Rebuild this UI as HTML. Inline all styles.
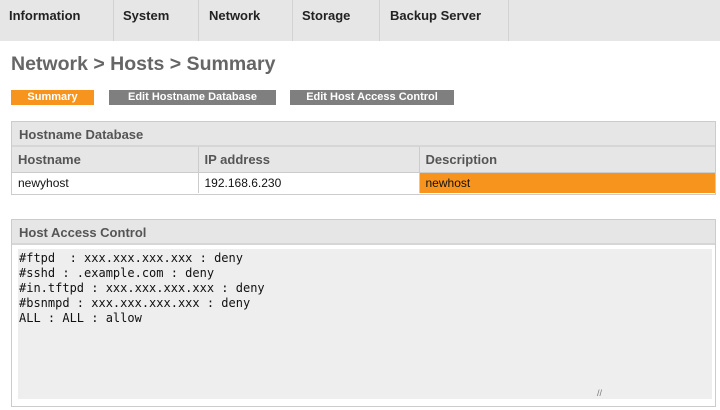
<!DOCTYPE html>
<html><head><style>
*{margin:0;padding:0;box-sizing:border-box}
body{width:720px;height:410px;background:#fff;font-family:"Liberation Sans",sans-serif;position:relative;overflow:hidden}
.nav{position:absolute;left:0;top:0;width:720px;height:41px;background:#e6e6e6}
.sep{position:absolute;top:0;width:1px;height:41px;background:#d2d2d2}
.nt{position:absolute;top:0;line-height:31px;font-weight:bold;font-size:13px;color:#222}
h1{position:absolute;left:11px;top:53px;font-size:19.5px;color:#666;font-weight:bold}
.btn{position:absolute;top:90px;height:15px;line-height:15px;color:#fff;font-size:11px;font-weight:bold;text-align:center;background:#7f7f7f}
.box{position:absolute;left:11px;width:705px;border:1px solid #ccc}
.hd{background:#e6e6e6;height:25px;line-height:25px;padding-left:7px;font-size:13px;color:#555;font-weight:bold;border-bottom:2px solid #d6d6d6}
table{border-collapse:collapse;width:100%;font-size:12px}
td{border-right:1px solid #ccc;padding-left:6px}
td:last-child{border-right:0}
tr.c td{background:#e6e6e6;color:#555;font-weight:bold;height:25px;font-size:13px;border-bottom:1px solid #ccc}
tr.d td{height:21px;color:#111}
pre{position:absolute;left:6px;top:29px;width:694px;height:150px;background:#eee;font-family:"DejaVu Sans Mono",monospace;font-size:12px;line-height:15px;padding:2px 1px;color:#111}
</style></head><body>
<div class="nav">
<div class="sep" style="left:113px"></div>
<div class="sep" style="left:198px"></div>
<div class="sep" style="left:292px"></div>
<div class="sep" style="left:379px"></div>
<div class="sep" style="left:508px"></div>
</div>
<div class="nt" style="left:9px">Information</div>
<div class="nt" style="left:123px">System</div>
<div class="nt" style="left:209px">Network</div>
<div class="nt" style="left:302px">Storage</div>
<div class="nt" style="left:390px">Backup Server</div>
<h1>Network &gt; Hosts &gt; Summary</h1>
<div class="btn" style="left:11px;width:83px;background:#f7941d">Summary</div>
<div class="btn" style="left:109px;width:167px">Edit Hostname Database</div>
<div class="btn" style="left:290px;width:164px">Edit Host Access Control</div>
<div class="box" style="top:121px;height:74px">
<div class="hd">Hostname Database</div>
<table><tr class="c"><td style="width:186px">Hostname</td><td style="width:221px">IP address</td><td>Description</td></tr>
<tr class="d"><td>newyhost</td><td>192.168.6.230</td><td style="background:#f7941d">newhost</td></tr></table>
</div>
<div class="box" style="top:219px;height:188px">
<div class="hd">Host Access Control</div>
<pre>#ftpd  : xxx.xxx.xxx.xxx : deny
#sshd : .example.com : deny
#in.tftpd : xxx.xxx.xxx.xxx : deny
#bsnmpd : xxx.xxx.xxx.xxx : deny
ALL : ALL : allow</pre>
<div style="position:absolute;left:585px;top:168px;font-size:9px;color:#777">//</div>
</div>
</body></html>
